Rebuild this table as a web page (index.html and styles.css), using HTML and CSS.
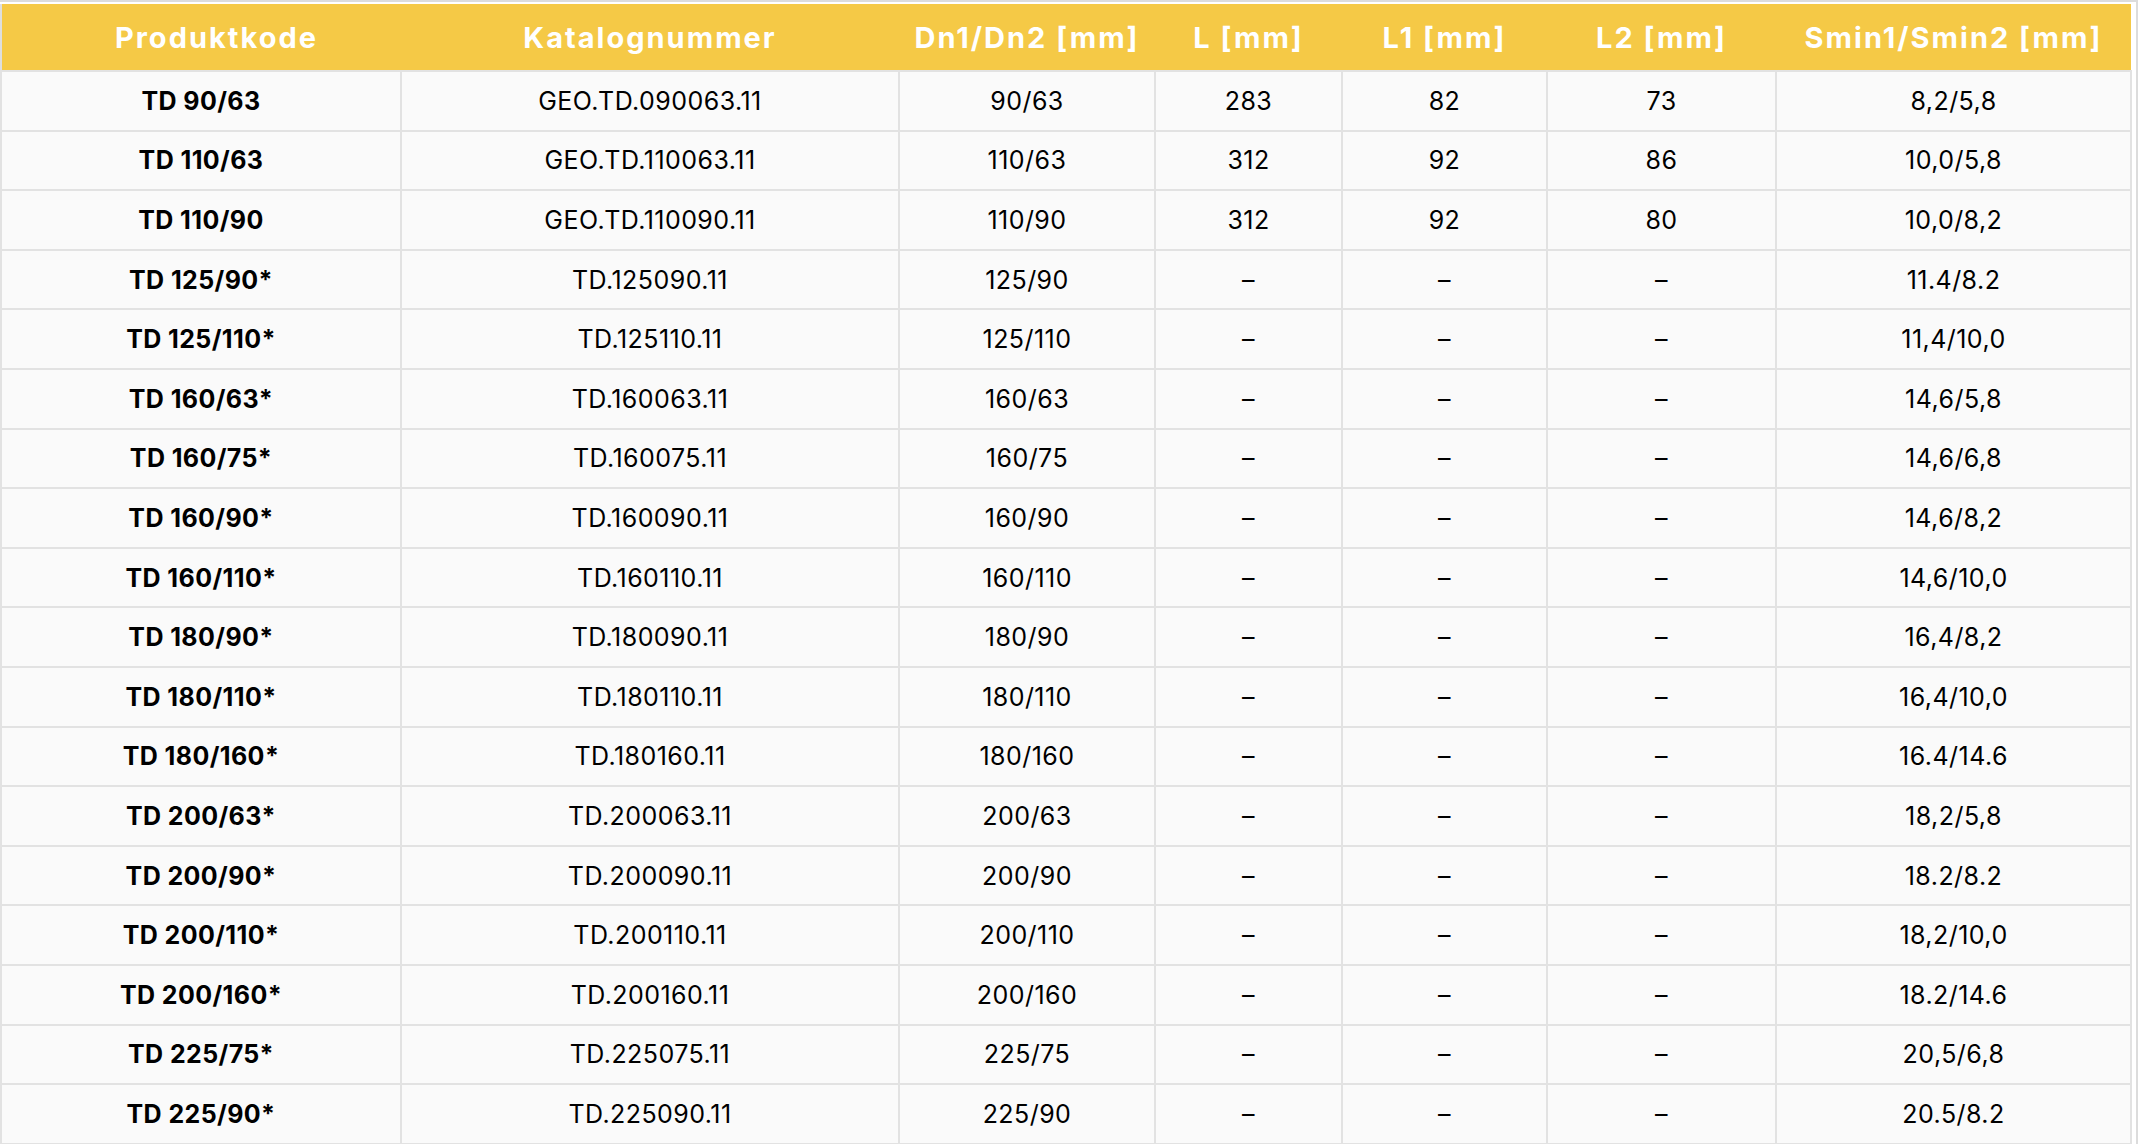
FILE: index.html
```html
<!DOCTYPE html>
<html lang="no">
<head>
<meta charset="utf-8">
<title>Produkttabell</title>
<link rel="stylesheet" href="styles.css">
</head>
<body>
<div class="frame">
<table class="spec">
<colgroup>
<col class="c1"><col class="c2"><col class="c3"><col class="c4"><col class="c5"><col class="c6"><col class="c7">
</colgroup>
<thead>
<tr><th class="first">Produktkode</th><th>Katalognummer</th><th>Dn1/Dn2 [mm]</th><th>L [mm]</th><th>L1 [mm]</th><th>L2 [mm]</th><th>Smin1/Smin2 [mm]</th></tr>
</thead>
<tbody>
<tr><td class="code">TD 90/63</td><td>GEO.TD.090063.11</td><td>90/63</td><td>283</td><td>82</td><td>73</td><td>8,2/5,8</td></tr>
<tr><td class="code">TD 110/63</td><td>GEO.TD.110063.11</td><td>110/63</td><td>312</td><td>92</td><td>86</td><td>10,0/5,8</td></tr>
<tr><td class="code">TD 110/90</td><td>GEO.TD.110090.11</td><td>110/90</td><td>312</td><td>92</td><td>80</td><td>10,0/8,2</td></tr>
<tr><td class="code">TD 125/90*</td><td>TD.125090.11</td><td>125/90</td><td>–</td><td>–</td><td>–</td><td>11.4/8.2</td></tr>
<tr><td class="code">TD 125/110*</td><td>TD.125110.11</td><td>125/110</td><td>–</td><td>–</td><td>–</td><td>11,4/10,0</td></tr>
<tr><td class="code">TD 160/63*</td><td>TD.160063.11</td><td>160/63</td><td>–</td><td>–</td><td>–</td><td>14,6/5,8</td></tr>
<tr><td class="code">TD 160/75*</td><td>TD.160075.11</td><td>160/75</td><td>–</td><td>–</td><td>–</td><td>14,6/6,8</td></tr>
<tr><td class="code">TD 160/90*</td><td>TD.160090.11</td><td>160/90</td><td>–</td><td>–</td><td>–</td><td>14,6/8,2</td></tr>
<tr><td class="code">TD 160/110*</td><td>TD.160110.11</td><td>160/110</td><td>–</td><td>–</td><td>–</td><td>14,6/10,0</td></tr>
<tr><td class="code">TD 180/90*</td><td>TD.180090.11</td><td>180/90</td><td>–</td><td>–</td><td>–</td><td>16,4/8,2</td></tr>
<tr><td class="code">TD 180/110*</td><td>TD.180110.11</td><td>180/110</td><td>–</td><td>–</td><td>–</td><td>16,4/10,0</td></tr>
<tr><td class="code">TD 180/160*</td><td>TD.180160.11</td><td>180/160</td><td>–</td><td>–</td><td>–</td><td>16.4/14.6</td></tr>
<tr><td class="code">TD 200/63*</td><td>TD.200063.11</td><td>200/63</td><td>–</td><td>–</td><td>–</td><td>18,2/5,8</td></tr>
<tr><td class="code">TD 200/90*</td><td>TD.200090.11</td><td>200/90</td><td>–</td><td>–</td><td>–</td><td>18.2/8.2</td></tr>
<tr><td class="code">TD 200/110*</td><td>TD.200110.11</td><td>200/110</td><td>–</td><td>–</td><td>–</td><td>18,2/10,0</td></tr>
<tr><td class="code">TD 200/160*</td><td>TD.200160.11</td><td>200/160</td><td>–</td><td>–</td><td>–</td><td>18.2/14.6</td></tr>
<tr><td class="code">TD 225/75*</td><td>TD.225075.11</td><td>225/75</td><td>–</td><td>–</td><td>–</td><td>20,5/6,8</td></tr>
<tr><td class="code">TD 225/90*</td><td>TD.225090.11</td><td>225/90</td><td>–</td><td>–</td><td>–</td><td>20.5/8.2</td></tr>
</tbody>
</table>
</div>
</body>
</html>
```

FILE: styles.css
```css
html, body {
  margin: 0;
  padding: 0;
  background: #ffffff;
}

body {
  font-family: Inter, "Noto Sans", "Liberation Sans", sans-serif;
  color: #000000;
  overflow: hidden;
}

.frame {
  width: 2138px;
  box-sizing: border-box;
  border-top: 2px solid #dcdcdc;
  border-right: 2px solid #dcdcdc;
  padding: 2px 4px 0 0;
}

.spec {
  border-collapse: collapse;
  table-layout: fixed;
  width: 2132px;
}

.c1 { width: 400px; }
.c2 { width: 498px; }
.c3 { width: 256px; }
.c4 { width: 187px; }
.c5 { width: 205px; }
.c6 { width: 229px; }
.c7 { width: auto; }

.spec th {
  background: #f5c946;
  color: #ffffff;
  font-weight: 700;
  font-size: 29px;
  letter-spacing: 2px;
  height: 66px;
  padding: 0;
  text-align: center;
  vertical-align: middle;
  border: none;
  border-left: 2px solid #dedede;
  border-bottom: 2px solid #e2e2e2;
}

.spec th + th {
  border-left: none;
}

.spec th.first {
  padding-left: 30px;
}

.spec tbody tr {
  height: 59.6px;
}

.spec td {
  background: #fafafa;
  border: 2px solid #e2e2e2;
  padding: 0;
  text-align: center;
  vertical-align: middle;
  font-size: 25px;
  font-weight: 400;
  letter-spacing: 0.45px;
}

.spec td.code {
  font-weight: 700;
  letter-spacing: 0.4px;
}
```
